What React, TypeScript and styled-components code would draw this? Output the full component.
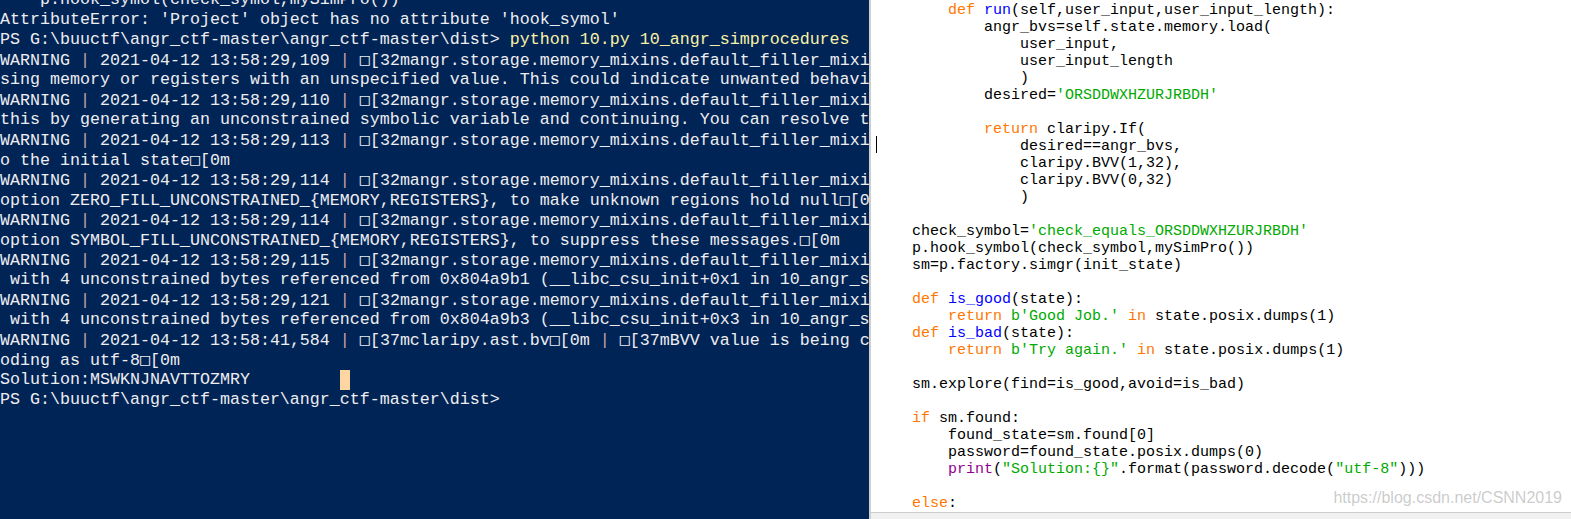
import React from "react";
import styled, { createGlobalStyle } from "styled-components";

const GlobalStyle = createGlobalStyle`
  html, body { margin: 0; padding: 0; overflow: hidden; background: #ffffff; }
  #root { width: 1571px; height: 519px; }
`;

const Screen = styled.div`
  display: flex;
  width: 1571px;
  height: 519px;
  overflow: hidden;
`;

const TerminalPane = styled.div`
  flex: none;
  width: 869px;
  height: 100%;
  background: #012456;
  overflow: hidden;
`;

const TerminalText = styled.div`
  margin-top: -10px;
  font-family: "Liberation Mono", "DejaVu Sans Mono", monospace;
  font-size: 16.67px;
  line-height: 20px;
  color: #eeedf0;
  white-space: pre;
`;

const TermLine = styled.div`
  height: 20px;
`;

const Cmd = styled.span`
  color: #f9f1a5;
`;

const Sep = styled.span`
  color: #c9a3a3;
`;

const Box = styled.span`
  font-family: "DejaVu Sans Mono", monospace;
`;

const BlockCursor = styled.span`
  display: inline-block;
  width: 10px;
  height: 20px;
  vertical-align: top;
  background: #fdd6a1;
`;

const EditorPane = styled.div`
  position: relative;
  flex: 1;
  display: flex;
  flex-direction: column;
  border-left: 2px solid #cfcfcf;
  background: #ffffff;
`;

const CodeArea = styled.div`
  position: relative;
  flex: 1;
  padding: 1.5px 0 0 5px;
  overflow: hidden;
  font-family: "Liberation Mono", "DejaVu Sans Mono", monospace;
  font-size: 15px;
  line-height: 17px;
  color: #000000;
  white-space: pre;
`;

const CodeLine = styled.div`
  height: 17px;
`;

const tokenColors: Record<string, string> = {
  n: "#000000",
  k: "#ff7700",
  d: "#0000ff",
  s: "#00aa00",
  b: "#900090",
};

const Tok = styled.span<{ $kind: string }>`
  color: ${(p) => tokenColors[p.$kind]};
`;

const Caret = styled.div`
  position: absolute;
  left: 5px;
  top: 136px;
  width: 1px;
  height: 17px;
  background: #000000;
`;

const StatusBar = styled.div`
  flex: none;
  height: 6px;
  border-top: 1px solid #cdcdcd;
  background: #f0f0f0;
`;

const Watermark = styled.div`
  position: absolute;
  right: 9px;
  bottom: 12px;
  font-family: "Liberation Sans", Arial, sans-serif;
  font-size: 16px;
  line-height: 18px;
  color: rgba(160, 160, 160, 0.55);
  text-shadow: 0 0 1px rgba(255, 255, 255, 0.8);
`;

const BOX = "\u25A1";

function Warn({ time, rest }: { time: string; rest: React.ReactNode }) {
  return (
    <TermLine>
      {"WARNING "}
      <Sep>|</Sep>
      {` 2021-04-12 ${time} `}
      <Sep>|</Sep>
      {" "}
      {rest}
    </TermLine>
  );
}

const mixi = (
  <>
    <Box>{BOX}</Box>
    {"[32mangr.storage.memory_mixins.default_filler_mixi"}
  </>
);

type Token = [string, string];

const code: Token[][] = [
  [["n", "        "], ["k", "def"], ["n", " "], ["d", "run"], ["n", "(self,user_input,user_input_length):"]],
  [["n", "            angr_bvs=self.state.memory.load("]],
  [["n", "                user_input,"]],
  [["n", "                user_input_length"]],
  [["n", "                )"]],
  [["n", "            desired="], ["s", "'ORSDDWXHZURJRBDH'"]],
  [],
  [["n", "            "], ["k", "return"], ["n", " claripy.If("]],
  [["n", "                desired==angr_bvs,"]],
  [["n", "                claripy.BVV(1,32),"]],
  [["n", "                claripy.BVV(0,32)"]],
  [["n", "                )"]],
  [],
  [["n", "    check_symbol="], ["s", "'check_equals_ORSDDWXHZURJRBDH'"]],
  [["n", "    p.hook_symbol(check_symbol,mySimPro())"]],
  [["n", "    sm=p.factory.simgr(init_state)"]],
  [],
  [["n", "    "], ["k", "def"], ["n", " "], ["d", "is_good"], ["n", "(state):"]],
  [["n", "        "], ["k", "return"], ["n", " "], ["s", "b'Good Job.'"], ["n", " "], ["k", "in"], ["n", " state.posix.dumps(1)"]],
  [["n", "    "], ["k", "def"], ["n", " "], ["d", "is_bad"], ["n", "(state):"]],
  [["n", "        "], ["k", "return"], ["n", " "], ["s", "b'Try again.'"], ["n", " "], ["k", "in"], ["n", " state.posix.dumps(1)"]],
  [],
  [["n", "    sm.explore(find=is_good,avoid=is_bad)"]],
  [],
  [["n", "    "], ["k", "if"], ["n", " sm.found:"]],
  [["n", "        found_state=sm.found[0]"]],
  [["n", "        password=found_state.posix.dumps(0)"]],
  [["n", "        "], ["b", "print"], ["n", "("], ["s", "\"Solution:{}\""], ["n", ".format(password.decode("], ["s", "\"utf-8\""], ["n", ")))"]],
  [],
  [["n", "    "], ["k", "else"], ["n", ":"]],
];

export default function App() {
  return (
    <>
      <GlobalStyle />
      <Screen>
        <TerminalPane>
          <TerminalText>
            <TermLine>{"    p.hook_symol(check_symol,mySimPro())"}</TermLine>
            <TermLine>{"AttributeError: 'Project' object has no attribute 'hook_symol'"}</TermLine>
            <TermLine>
              {"PS G:\\buuctf\\angr_ctf-master\\angr_ctf-master\\dist> "}
              <Cmd>python 10.py 10_angr_simprocedures</Cmd>
            </TermLine>
            <Warn time="13:58:29,109" rest={mixi} />
            <TermLine>{"sing memory or registers with an unspecified value. This could indicate unwanted behavi"}</TermLine>
            <Warn time="13:58:29,110" rest={mixi} />
            <TermLine>{"this by generating an unconstrained symbolic variable and continuing. You can resolve t"}</TermLine>
            <Warn time="13:58:29,113" rest={mixi} />
            <TermLine>
              {"o the initial state"}
              <Box>{BOX}</Box>
              {"[0m"}
            </TermLine>
            <Warn time="13:58:29,114" rest={mixi} />
            <TermLine>
              {"option ZERO_FILL_UNCONSTRAINED_{MEMORY,REGISTERS}, to make unknown regions hold null"}
              <Box>{BOX}</Box>
              {"[0m"}
            </TermLine>
            <Warn time="13:58:29,114" rest={mixi} />
            <TermLine>
              {"option SYMBOL_FILL_UNCONSTRAINED_{MEMORY,REGISTERS}, to suppress these messages."}
              <Box>{BOX}</Box>
              {"[0m"}
            </TermLine>
            <Warn time="13:58:29,115" rest={mixi} />
            <TermLine>{" with 4 unconstrained bytes referenced from 0x804a9b1 (__libc_csu_init+0x1 in 10_angr_s"}</TermLine>
            <Warn time="13:58:29,121" rest={mixi} />
            <TermLine>{" with 4 unconstrained bytes referenced from 0x804a9b3 (__libc_csu_init+0x3 in 10_angr_s"}</TermLine>
            <Warn
              time="13:58:41,584"
              rest={
                <>
                  <Box>{BOX}</Box>
                  {"[37mclaripy.ast.bv"}
                  <Box>{BOX}</Box>
                  {"[0m "}
                  <Sep>|</Sep>
                  {" "}
                  <Box>{BOX}</Box>
                  {"[37mBVV value is being c"}
                </>
              }
            />
            <TermLine>
              {"oding as utf-8"}
              <Box>{BOX}</Box>
              {"[0m"}
            </TermLine>
            <TermLine>
              {"Solution:MSWKNJNAVTTOZMRY         "}
              <BlockCursor />
            </TermLine>
            <TermLine>{"PS G:\\buuctf\\angr_ctf-master\\angr_ctf-master\\dist>"}</TermLine>
          </TerminalText>
        </TerminalPane>
        <EditorPane>
          <CodeArea>
            {code.map((line, i) => (
              <CodeLine key={i}>
                {line.map(([kind, text], j) => (
                  <Tok key={j} $kind={kind}>
                    {text}
                  </Tok>
                ))}
              </CodeLine>
            ))}
            <Caret />
          </CodeArea>
          <StatusBar />
          <Watermark>https://blog.csdn.net/CSNN2019</Watermark>
        </EditorPane>
      </Screen>
    </>
  );
}
